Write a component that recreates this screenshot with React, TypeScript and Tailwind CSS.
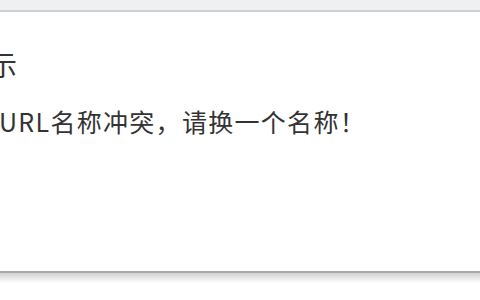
export default function App() {
  return (
    <div
      className="flex h-[300px] w-[480px] flex-col overflow-hidden bg-white text-[#333]"
      style={{ fontFamily: '"Microsoft YaHei", "Noto Sans CJK SC", sans-serif' }}
    >
      {/* 顶部浏览器条 */}
      <div className="h-[10px] shrink-0 bg-[#eff0f2]" />
      <div className="h-[2px] shrink-0 bg-[#d0d0d0]" />

      {/* 弹窗内容 */}
      <div className="flex h-[259px] shrink-0 flex-col">
        <div className="-ml-[39px] mt-[36px] text-[28px] leading-[32px]">提示</div>
        <div className="mt-[26px] -ml-[1px] text-[25px] leading-[30px] tracking-[1.3px] text-[#333]">
          URL名称冲突，请换一个名称！
        </div>
      </div>

      {/* 底部阴影 */}
      <div className="h-[2px] shrink-0 bg-[#a9a9a9]" />
      <div className="h-[10px] shrink-0 bg-gradient-to-b from-[#d2d2d2] to-white" />
      <div className="flex-1 bg-white" />
    </div>
  )
}
